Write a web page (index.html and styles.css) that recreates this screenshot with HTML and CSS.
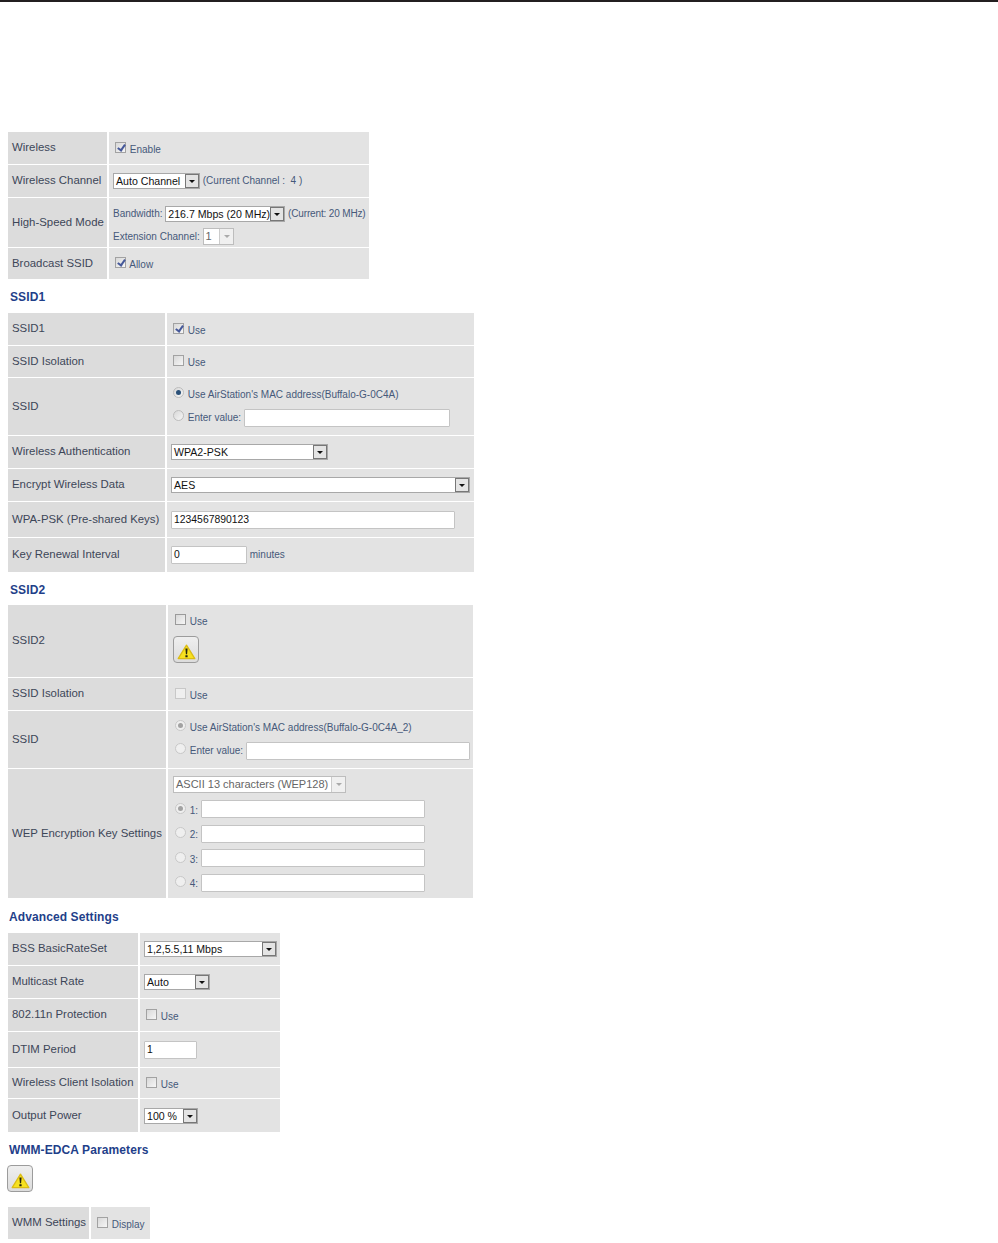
FILE: index.html
```html
<!DOCTYPE html>
<html>
<head>
	<title>Wireless Settings</title>
	<meta name="viewport" content="width=device-width">
	<link rel="stylesheet" href="styles.css">
</head>
<body>
	<div class="topline"></div>

	<table class="form t-basic">
		<tr class="h32"><th>Wireless</th><td><label class="check"><input type="checkbox" checked disabled> Enable</label></td></tr>
		<tr class="h32"><th>Wireless Channel</th><td>
			<span class="sel w87"><span class="sel-text">Auto Channel</span><span class="arrow"></span></span>
			<span class="note">(Current Channel :&nbsp; 4 )</span>
		</td></tr>
		<tr class="h49"><th>High-Speed Mode</th><td class="low">
			<div class="line">Bandwidth:
				<span class="sel w120"><span class="sel-text">216.7 Mbps (20 MHz)</span><span class="arrow"></span></span>
				<span class="note">(Current: 20 MHz)</span>
			</div>
			<div class="line">Extension Channel:
				<span class="sel off w31"><span class="sel-text">1</span><span class="arrow"></span></span>
			</div>
		</td></tr>
		<tr class="h31"><th>Broadcast SSID</th><td><label class="check"><input type="checkbox" checked disabled> Allow</label></td></tr>
	</table>

	<h3 class="h-ssid">SSID1</h3>
	<table class="form t-ssid">
		<tr class="h32"><th>SSID1</th><td><label class="check"><input type="checkbox" checked disabled> Use</label></td></tr>
		<tr class="h31"><th>SSID Isolation</th><td><label class="check"><input type="checkbox" disabled> Use</label></td></tr>
		<tr class="h57"><th>SSID</th><td>
			<div class="line"><label class="check"><input type="radio" checked disabled> Use AirStation's MAC address(Buffalo-G-0C4A)</label></div>
			<div class="line"><label class="check"><input type="radio" disabled> Enter value:</label> <span class="field w206"></span></div>
		</td></tr>
		<tr class="h32"><th>Wireless Authentication</th><td><span class="sel w157"><span class="sel-text">WPA2-PSK</span><span class="arrow"></span></span></td></tr>
		<tr class="h32"><th>Encrypt Wireless Data</th><td><span class="sel w299"><span class="sel-text">AES</span><span class="arrow"></span></span></td></tr>
		<tr class="h35"><th>WPA-PSK (Pre-shared Keys)</th><td><span class="field w284">1234567890123</span></td></tr>
		<tr class="h34"><th>Key Renewal Interval</th><td><span class="field w76">0</span> <span class="note">minutes</span></td></tr>
	</table>

	<h3 class="h-ssid h-ssid2">SSID2</h3>
	<table class="form t-ssid2">
		<tr class="h72"><th>SSID2</th><td class="top">
			<div class="line-tight"><label class="check"><input type="checkbox" disabled> Use</label></div>
			<button class="warn" type="button"><svg width="19" height="16" viewBox="0 0 19 16"><path d="M9.5 1.2 L17.8 14.6 H1.2 Z" fill="#f7e21f" stroke="#dcbc14" stroke-width="1.3" stroke-linejoin="round"/><path d="M8.4 4.6 H10.6 L10.1 10.2 H8.9 Z M8.4 11.2 H10.6 V13.2 H8.4 Z" fill="#26240c"/></svg></button>
		</td></tr>
		<tr class="h32"><th>SSID Isolation</th><td><label class="check"><input type="checkbox" disabled> Use</label></td></tr>
		<tr class="h57"><th>SSID</th><td>
			<div class="line"><label class="check"><input type="radio" checked disabled> Use AirStation's MAC address(Buffalo-G-0C4A_2)</label></div>
			<div class="line"><label class="check"><input type="radio" disabled> Enter value:</label> <span class="field w224"></span></div>
		</td></tr>
		<tr class="h129"><th>WEP Encryption Key Settings</th><td>
			<div class="key"><span class="sel off w173"><span class="sel-text">ASCII 13 characters (WEP128)</span><span class="arrow"></span></span></div>
			<div class="key"><label class="check"><input type="radio" checked disabled> 1:</label> <span class="field w224"></span></div>
			<div class="key"><label class="check"><input type="radio" disabled> 2:</label> <span class="field w224"></span></div>
			<div class="key"><label class="check"><input type="radio" disabled> 3:</label> <span class="field w224"></span></div>
			<div class="key"><label class="check"><input type="radio" disabled> 4:</label> <span class="field w224"></span></div>
		</td></tr>
	</table>

	<h3 class="h-adv">Advanced Settings</h3>
	<table class="form t-adv">
		<tr class="h32"><th>BSS BasicRateSet</th><td><span class="sel w133"><span class="sel-text">1,2,5.5,11 Mbps</span><span class="arrow"></span></span></td></tr>
		<tr class="h32"><th>Multicast Rate</th><td><span class="sel w66"><span class="sel-text">Auto</span><span class="arrow"></span></span></td></tr>
		<tr class="h32"><th>802.11n Protection</th><td><label class="check"><input type="checkbox" disabled> Use</label></td></tr>
		<tr class="h35"><th>DTIM Period</th><td><span class="field w53">1</span></td></tr>
		<tr class="h30"><th>Wireless Client Isolation</th><td><label class="check"><input type="checkbox" disabled> Use</label></td></tr>
		<tr class="h33"><th>Output Power</th><td><span class="sel w54"><span class="sel-text">100 %</span><span class="arrow"></span></span></td></tr>
	</table>

	<h3 class="h-wmm">WMM-EDCA Parameters</h3>
	<button class="warn warn-wmm" type="button"><svg width="19" height="16" viewBox="0 0 19 16"><path d="M9.5 1.2 L17.8 14.6 H1.2 Z" fill="#f7e21f" stroke="#dcbc14" stroke-width="1.3" stroke-linejoin="round"/><path d="M8.4 4.6 H10.6 L10.1 10.2 H8.9 Z M8.4 11.2 H10.6 V13.2 H8.4 Z" fill="#26240c"/></svg></button>
	<table class="form t-wmm">
		<tr class="h32"><th>WMM Settings</th><td><label class="check"><input type="checkbox" disabled> Display</label></td></tr>
	</table>
</body>
</html>
```
FILE: styles.css
```css
body {
	font-family: "Liberation Sans", Arial, sans-serif;
	font-size: 10px;
	color: #46597a;
	background: #fff;
	margin: 0;
	padding: 0 0 0 6px;
}

.topline {
	height: 2px;
	background: #231f20;
	margin: 0 0 129px -6px;
}

h3 {
	font-size: 12px;
	line-height: 14px;
	color: #1f3f8a;
	letter-spacing: 0.1px;
	margin: 0;
}
.h-ssid { margin: 10px 0 8px 4px; }
.h-ssid2 { margin-bottom: 7px; }
.h-adv { margin: 11px 0 8px 3px; }
.h-wmm { margin: 10px 0 8px 3px; }

.form {
	border-collapse: separate;
	border-spacing: 2px 1px;
	table-layout: fixed;
}
.form th {
	background: #dcdcdc;
	color: #3c4658;
	font-size: 11.4px;
	font-weight: normal;
	text-align: left;
	padding: 0 0 2px 4px;
	white-space: nowrap;
}
.form td {
	background: #e3e3e3;
	padding: 0 0 0 4px;
	white-space: nowrap;
}
.form td.low { vertical-align: top; padding-top: 4px; }
.form td.top { vertical-align: top; padding-top: 8px; }

.t-basic { width: 365px; }
.t-basic th { width: 95px; }
.t-ssid { width: 470px; }
.t-ssid th { width: 153px; }
.t-ssid2 { width: 469px; }
.t-ssid2 th { width: 154px; }
.t-ssid2 td { padding-left: 5px; }
.t-adv { width: 276px; }
.t-adv th { width: 126px; }
.t-wmm { width: 146px; margin-top: 14px; }
.t-wmm th { width: 77px; }

.h30 { height: 30px; }
.h31 { height: 31px; }
.h32 { height: 32px; }
.h33 { height: 33px; }
.h34 { height: 34px; }
.h35 { height: 35px; }
.h49 { height: 49px; }
.h57 { height: 57px; }
.h72 { height: 72px; }
.h129 { height: 129px; }

.line { line-height: 22px; height: 22.5px; }
.low .line { line-height: 23px; }
.low .note { letter-spacing: -0.15px; }
.line-tight { line-height: 18px; height: 18px; }
.key { height: 24.5px; display: flex; align-items: center; gap: 3px; }

.check input {
	appearance: none;
	-webkit-appearance: none;
	box-sizing: border-box;
	width: 11px;
	height: 11px;
	margin: 0 1px 0 2px;
	vertical-align: 0;
	border: 1px solid #a2a2a2;
	background: linear-gradient(135deg, #d8d8d8, #f6f6f6);
	position: relative;
}
.check input[type="radio"] {
	border-radius: 50%;
	border-color: #bdbdbd;
}
.check input[type="checkbox"]:checked::after {
	content: "";
	position: absolute;
	left: 3px;
	top: 0;
	width: 3px;
	height: 6px;
	border: solid #45589a;
	border-width: 0 2px 2px 0;
	transform: rotate(35deg);
}
.check input[type="radio"]:checked::after {
	content: "";
	position: absolute;
	left: 2px;
	top: 2px;
	width: 5px;
	height: 5px;
	border-radius: 50%;
	background: #2a5078;
}
.t-ssid2 .check input {
	border-color: #c8c8c8;
	background: #efefef;
}
.t-ssid2 .line-tight .check input {
	border-color: #9a9a9a;
	background: linear-gradient(135deg, #d8d8d8, #f6f6f6);
}
.t-ssid2 .check input[type="radio"]:checked::after { background: #a2a2a2; }

.sel {
	display: inline-flex;
	box-sizing: border-box;
	height: 16px;
	border: 1px solid #a8a8a8;
	background: #fff;
	color: #111;
	font-size: 10.6px;
	vertical-align: middle;
	line-height: 14px;
}
.sel-text {
	flex: 1;
	min-width: 0;
	padding-left: 2px;
	overflow: hidden;
}
.arrow {
	flex: none;
	width: 14px;
	border: 1px solid #777;
	background: #e4e4e4;
	box-sizing: border-box;
	position: relative;
}
.arrow::after {
	content: "";
	position: absolute;
	left: 3px;
	top: 5px;
	border: 3px solid transparent;
	border-top: 3px solid #111;
	border-bottom: 0;
}
.sel.off { color: #666; height: 17px; border-color: #bdbdbd; line-height: 15px; font-size: 11px; }
.sel.off .arrow { border: 0; border-left: 1px solid #ccc; background: #f0f0f0; }
.sel.off .arrow::after { border-top-color: #aaa; left: 4px; top: 6px; }

.field {
	display: inline-block;
	box-sizing: border-box;
	height: 18px;
	border: 1px solid #c4c4c4;
	border-radius: 1px;
	background: #fff;
	color: #111;
	font-size: 10.4px;
	line-height: 16px;
	padding-left: 2px;
	vertical-align: middle;
}

.warn {
	display: block;
	box-sizing: border-box;
	width: 26px;
	height: 27px;
	margin-top: 5px;
	padding: 0;
	border: 1px solid #9c9c9c;
	border-radius: 4px;
	background: linear-gradient(#efefef, #dcdcdc);
}
.warn svg { display: block; margin: 4px auto 0; }
.warn-wmm { margin: 0 0 0 1px; }

.w31 { width: 31px; }
.w53 { width: 53px; }
.w54 { width: 54px; }
.w66 { width: 66px; }
.w76 { width: 76px; }
.w87 { width: 87px; }
.w120 { width: 120px; }
.w133 { width: 133px; }
.w157 { width: 157px; }
.w173 { width: 173px; }
.w206 { width: 206px; }
.w224 { width: 224px; }
.w284 { width: 284px; }
.w299 { width: 299px; }
```
